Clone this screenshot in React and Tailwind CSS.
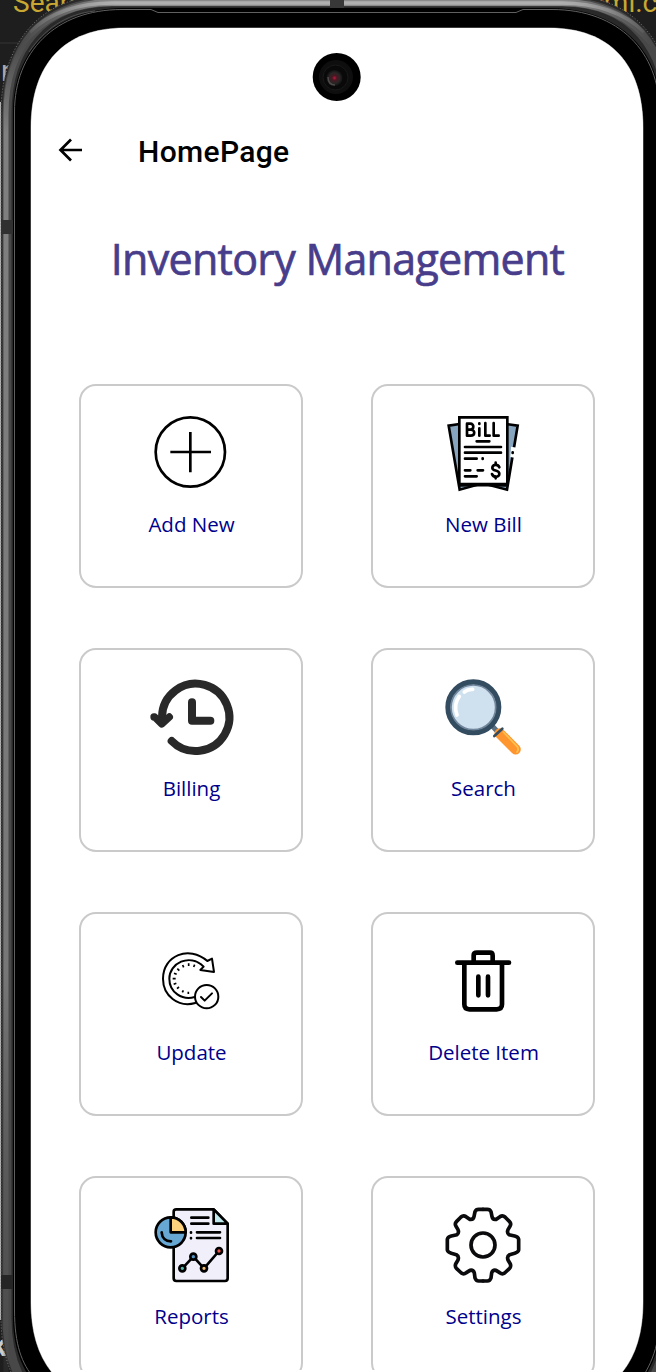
import React from "react";

const cornerPaths = {
  rim: "M337 8H125C55 8 13 50 13 112V715H337Z",
  screen: "M337 28H125C64 28 31 64 31 128V715H337Z",
};

function Quadrants({ d, fill, stroke }) {
  return (
    <g fill={fill} stroke={stroke}>
      <path d={d} />
      <path d={d} transform="translate(674 0) scale(-1 1)" />
      <path d={d} transform="translate(0 1430) scale(1 -1)" />
      <path d={d} transform="translate(674 1430) scale(-1 -1)" />
    </g>
  );
}

const outerEdge = "M337 -5H110C35 -5 1 50 1 112V1318C1 1380 35 1435 110 1435H564C639 1435 673 1380 673 1318V112C673 50 639 -5 564 -5Z";
const screenEdge = "M125 28C64 28 31 64 31 128V1302C31 1366 64 1402 125 1402H549C610 1402 643 1366 643 1302V128C643 64 610 28 549 28Z";

function DeviceFrame() {
  return (
    <svg className="absolute inset-0" width="656" height="1372" viewBox="0 0 656 1372" fill="none" aria-hidden="true">
      <defs>
        <radialGradient id="lens">
          <stop offset="0" stopColor="#b51c3a" />
          <stop offset=".3" stopColor="#4b1623" />
          <stop offset=".65" stopColor="#292626" />
          <stop offset="1" stopColor="#111" />
        </radialGradient>
        <linearGradient id="topShine" gradientUnits="userSpaceOnUse" x1="20" y1="0" x2="654" y2="0">
          <stop offset="0" stopColor="#b0b0b0" stopOpacity="0" />
          <stop offset=".15" stopColor="#b0b0b0" />
          <stop offset=".85" stopColor="#b0b0b0" />
          <stop offset="1" stopColor="#b0b0b0" stopOpacity="0" />
        </linearGradient>
        <linearGradient id="sideShine" gradientUnits="userSpaceOnUse" x1="0" y1="40" x2="0" y2="1372">
          <stop offset="0" stopColor="#808080" stopOpacity="0" />
          <stop offset=".07" stopColor="#808080" />
          <stop offset=".7" stopColor="#777" />
          <stop offset="1" stopColor="#555" stopOpacity=".2" />
        </linearGradient>
      </defs>
      <path d="M0 43H50" stroke="#343434" />
      <path d="M0 102V1320" stroke="#b5b5b5" strokeWidth="2" />
      <path d={outerEdge} fill="#292929" />
      <path d={outerEdge} stroke="#777" strokeWidth="1" strokeDasharray="1 2" />
      <path d="M7 1330V114C7 50 41 2 112 2H562C633 2 667 50 667 114V1318C667 1380 630 1428 562 1428H112C45 1428 7 1385 7 1318" stroke="#484848" strokeWidth="9" />
      <path d="M6 1372V114C6 80 15 53 33 34" stroke="url(#sideShine)" strokeWidth="5" />
      <path d="M20 45C45 15 75 2.500 112 2.500H562C599 2.500 629 15 654 45" stroke="url(#topShine)" strokeWidth="7" strokeOpacity=".65" />
      <path d="M30 32C50 12 80 3 112 3H562C594 3 624 12 644 32" stroke="url(#topShine)" strokeWidth="3.500" />
      <path d="M1 220H13V234H1Z" fill="#303030" />
      <path d="M1 1275H13V1289H1Z" fill="#252525" />
      <path d="M330 0H344V8H330Z" fill="#383838" />
      <Quadrants d={cornerPaths.rim} fill="#000" />
      <path d="M14.500 1310V112C14.500 52 55 9.500 122 9.500H151L158 12.500H516L523 9.500H552C619 9.500 659.500 52 659.500 112V1318C659.500 1375 620 1420 555 1420M14.500 1310C14.500 1345 22 1364 34 1378" stroke="#606060" />
      <path d="M29 52C44 30 65 14 95 11" stroke="#505050" />
      <path d={screenEdge} fill="#fff" stroke="#777" strokeWidth="1" />
      <Quadrants d={cornerPaths.screen} fill="#fff" />
      <circle cx="336.700" cy="77" r="24" fill="#000" />
      <circle cx="336" cy="77" r="17" fill="#0e0e0e" />
      <circle cx="335.500" cy="77.500" r="12.500" fill="#090909" stroke="#191919" />
      <circle cx="334.500" cy="78" r="8" fill="url(#lens)" />
      <path d="M328 77C328 82 330 85 335 85" stroke="#625e5c" strokeWidth="1.500" strokeOpacity=".7" />
    </svg>
  );
}

function Icon({ viewBox, children }) {
  return (
    <svg className="relative left-px overflow-visible" width="110" height="90" viewBox={viewBox} fill="none" stroke="#000" strokeLinecap="round" strokeLinejoin="round">
      {children}
    </svg>
  );
}

const AddIcon = () => (
  <Icon viewBox="-10 0 330 270">
    <circle cx="150" cy="156" r="104" strokeWidth="8" />
    <path d="M150 96V217M90 156H212" strokeWidth="8" strokeLinecap="butt" />
  </Icon>
);

const BillIcon = () => (
  <Icon viewBox="-2 0 330 270">
    <g strokeWidth="8" strokeLinejoin="miter">
      <path d="M90 72L57 77L90 269L159 250L232 269L264 77L230 72" fill="#87a5bf" />
      <path d="M244 140L262 143L254 173L242 171Z" fill="#fff" stroke="none" />
      <path d="M249 157V159" />
      <path d="M89 52H233V252H89Z" fill="#fff" />
      <path d="M91 256L159 255L229 256" />
    </g>
    <g strokeWidth="8">
      <path d="M112 71V107H123C137 107 137 89 124 89H113M112 71H122C134 71 134 89 121 89M149 85V107M149 70V72M167 69V107H180M192 69V107H207" />
      <path d="M141 124H179M106 141H214M106 158H214M106 176H141M159 175V177M106 211H122M144 211H160M106 229H141" />
      <path d="M209 202C204 190 188 194 188 204C188 215 209 208 209 221C209 234 190 232 187 222M198 188V193M198 230V235" />
    </g>
  </Icon>
);

const HistoryIcon = () => (
  <Icon viewBox="-9 -2 330 270">
    <g stroke="#292929" strokeWidth="24">
      <path d="M66 157A101 101 0 1 1 95 229" />
      <path d="M156 113V168H211" />
      <path d="M42 157H44L65 178L87 158L88 157" strokeWidth="22" />
      <path d="M54 164H78L65 181Z" strokeWidth="10" fill="#292929" />
    </g>
  </Icon>
);

const SearchIcon = () => (
  <Icon viewBox="-2 -2 330 270">
    <path d="M185 181L212 210" stroke="#5c7183" strokeWidth="15" />
    <path d="M210 206L258 254" stroke="#ff952f" strokeWidth="31" />
    <path d="M194 214L218 192" stroke="#344c60" strokeWidth="8" />
    <path d="M221 202L262 245Q269 254 262 262" stroke="#ffc24e" strokeWidth="5" />
    <circle cx="131" cy="128" r="76" fill="#cfe0ef" stroke="#344c60" strokeWidth="16" />
    <circle cx="131" cy="128" r="67" stroke="#71869a" strokeWidth="5" />
    <path d="M104 82Q115 73 129 74M89 95C76 112 74 129 82 151" stroke="#fff" strokeWidth="11" />
  </Icon>
);

const UpdateIcon = () => (
  <Icon viewBox="-8 -20 330 270">
    <g strokeWidth="6">
      <path d="M167 205C115 220 70 182 70 132C70 62 148 31 203 79L217 72L223 112L182 106L192 96C149 54 89 86 89 132C89 173 128 198 165 187" />
      <circle cx="201" cy="186" r="35" fill="#fff" />
      <path d="M184 187L195 198L217 176" />
      <path d="M147 86V94M165 90L162 97M129 91L132 98M113 102L119 108M103 116L111 119M99 132H108M102 149L110 146M112 162L118 157M128 173L131 167M146 178V171" strokeWidth="5" strokeLinecap="butt" />
    </g>
  </Icon>
);

const DeleteIcon = () => (
  <Icon viewBox="-2 -21 330 270">
    <path d="M83 83H238M132 81V61Q132 53 142 53H181Q189 53 189 62V81M104 85V208Q104 223 119 223H201Q217 223 217 208V85M146 125V181M175 125V181" strokeWidth="14" />
  </Icon>
);

const ReportIcon = () => (
  <Icon viewBox="-10 -9 330 270">
    <g strokeWidth="8">
      <path d="M108 43H220L262 86V250Q262 258 254 258H108Q100 258 100 250V50Q100 43 108 43Z" fill="#f0effa" />
      <path d="M220 43V86H262Z" fill="#bfe8ed" />
      <circle cx="91" cy="112" r="45" fill="#66a8d3" />
      <path d="M91 67V112H136A45 45 0 0 0 91 67Z" fill="#ffd17c" />
      <path d="M64 112C65 129 76 139 92 139M153 68H204M153 86H204M170 112H239M170 129H239" />
      <path d="M152 112V113M152 129V130M126 220L159 185L191 220L236 168" />
      <circle cx="126" cy="220" r="9" fill="#53b8ab" />
      <circle cx="159" cy="185" r="9" fill="#5595c6" />
      <circle cx="191" cy="220" r="9" fill="#f1bc74" />
      <circle cx="236" cy="168" r="9" fill="#ee5147" />
    </g>
  </Icon>
);

const gearSide = "M160 43H173Q181 43 184 50L187 65Q189 75 200 73L211 65Q219 60 226 66L239 79Q246 86 241 94L235 104Q231 113 238 119L255 123Q266 126 267 133V165Q266 171 255 175L240 179Q231 184 235 195L242 207Q245 215 239 221L225 234Q218 239 210 233L199 226Q189 224 186 234L184 249Q181 258 173 258H160";

const SettingsIcon = () => (
  <Icon viewBox="-2 -9 330 270">
    <g strokeWidth="11" stroke="#0b0b0d">
      <path d={gearSide} />
      <path d={gearSide} transform="translate(320 0) scale(-1 1)" />
      <circle cx="160" cy="150" r="36" />
    </g>
  </Icon>
);

const items = [
  ["Add New", AddIcon],
  ["New Bill", BillIcon],
  ["Billing", HistoryIcon],
  ["Search", SearchIcon],
  ["Update", UpdateIcon],
  ["Delete Item", DeleteIcon],
  ["Reports", ReportIcon],
  ["Settings", SettingsIcon],
];

function ActionCard({ label, Drawing }) {
  return (
    <button className="flex h-[204px] w-[224px] flex-col items-center rounded-[17px] border-2 border-[#cacaca] bg-white pt-[14px]">
      <Drawing />
      <span className="mt-[19px] whitespace-nowrap pl-px text-[20.500px] leading-[30px] text-[#00008b]">{label}</span>
    </button>
  );
}

export default function App() {
  return (
    <div className="relative h-[1372px] w-[656px] overflow-hidden bg-[#1e1e1e] font-['Open_Sans',sans-serif]">
      <span className="absolute left-[13px] top-[-13px] font-['Roboto',sans-serif] text-[28px] leading-[32px] text-[#c8a832]">Search</span>
      <span className="absolute left-[589px] top-[-13px] whitespace-nowrap font-['Roboto',sans-serif] text-[28px] leading-[32px] text-[#c8a832]">eml.c</span>
      <span className="absolute left-[1px] top-[54px] font-['Roboto',sans-serif] text-[29px] leading-[34px] text-[#aaa]">n</span>
      <span className="absolute left-[-9px] top-[1329px] font-['Roboto',sans-serif] text-[29px] font-bold leading-[34px] text-[#ccc]">k</span>
      <DeviceFrame />
      <main className="relative h-[1370px] overflow-hidden">
        <header className="flex items-center pl-[58px] pt-[130px]">
          <button aria-label="Back">
            <svg width="26" height="36" viewBox="0 0 26 36" fill="none" stroke="#000" strokeWidth="2.700">
              <path d="M24 18H2.500M13 7.500L2.500 18L13 28.500" />
            </svg>
          </button>
          <h2 className="ml-[54px] mt-[4px] font-['Roboto',sans-serif] text-[30px] font-medium leading-[36px] tracking-[0.35px] text-black">HomePage</h2>
        </header>
        <h1 className="mt-[59px] pl-[19px] text-center text-[43px] leading-[60px] tracking-[-0.72px] text-[#483d8b] [-webkit-text-stroke:0.7px_#483d8b]">Inventory Management</h1>
        <section className="ml-[79px] mt-[95px] grid w-[516px] grid-cols-2 justify-between gap-x-[68px] gap-y-[60px]">
          {items.map(([label, Drawing]) => (
            <ActionCard key={label} label={label} Drawing={Drawing} />
          ))}
        </section>
      </main>
    </div>
  );
}
